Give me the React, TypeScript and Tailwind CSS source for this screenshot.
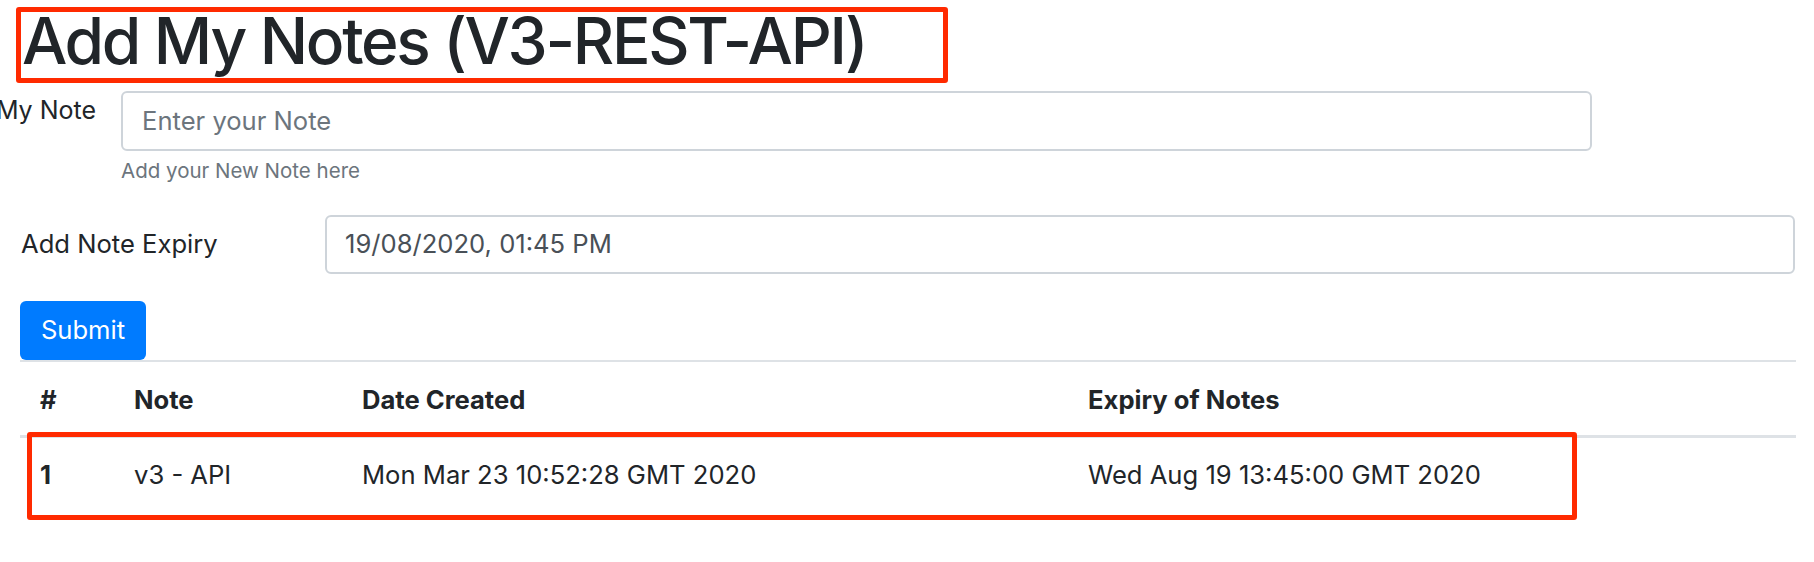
import React from "react";

export default function App() {
  return (
    <div className="relative w-[1814px] h-[562px] overflow-hidden bg-white text-[#212529] font-['Inter','Noto_Sans',sans-serif]">
      {/* Title */}
      <div className="relative h-[86px]">
        <h1 className="pl-[22px] pt-[3px] text-[64px] leading-[76px] font-medium tracking-[-2.3px] whitespace-nowrap">
          Add My Notes (V3-REST-API)
        </h1>
        <div className="absolute left-[16px] top-[7px] w-[932px] h-[76px] border-[5px] border-[#ff2a00] rounded-[3px]" />
      </div>

      {/* My Note row */}
      <div className="flex mt-[5px]">
        <div className="w-[121px] shrink-0 flex justify-end pr-[25px] pt-[4px]">
          <span className="whitespace-nowrap text-[25px] leading-[30px]">My Note</span>
        </div>
        <div className="w-[1471px] shrink-0">
          <div className="h-[60px] border-2 border-[#ced4da] rounded-[6px] flex items-center px-[19px]">
            <span className="text-[25.6px] text-[#6c757d]">Enter your Note</span>
          </div>
          <div className="mt-[5px] text-[20.5px] leading-[30px] text-[#6c757d]">Add your New Note here</div>
        </div>
      </div>

      {/* Expiry row */}
      <div className="flex items-center mt-[29px]">
        <div className="w-[325px] shrink-0 pl-[21px] text-[25.6px]">Add Note Expiry</div>
        <div className="w-[1470px] shrink-0 h-[59px] border-2 border-[#ced4da] rounded-[6px] flex items-center px-[18px]">
          <span className="text-[25.6px] text-[#495057]">19/08/2020, 01:45 PM</span>
        </div>
      </div>

      {/* Submit */}
      <div className="pl-[20px] mt-[27px]">
        <button className="w-[126px] h-[59px] bg-[#007bff] text-white rounded-[6px] text-[25.6px]">Submit</button>
      </div>

      {/* Table */}
      <div className="relative ml-[20px] w-[1776px]">
        <table className="w-full border-collapse text-[25.6px]">
          <thead>
            <tr className="border-t-2 border-[#dee2e6] border-b-[3px]">
              <th className="w-[94px] text-left font-bold pl-[20px] h-[75px] pt-[3px]">#</th>
              <th className="w-[229px] text-left font-bold pl-[20px] pt-[3px]">Note</th>
              <th className="w-[726px] text-left font-bold pl-[19px] pt-[3px]">Date Created</th>
              <th className="text-left font-bold pl-[19px] pt-[3px]">Expiry of Notes</th>
            </tr>
          </thead>
          <tbody>
            <tr>
              <td className="pl-[20px] h-[76px] font-bold">1</td>
              <td className="pl-[20px]">v3 - API</td>
              <td className="pl-[19px]">Mon Mar 23 10:52:28 GMT 2020</td>
              <td className="pl-[19px]">Wed Aug 19 13:45:00 GMT 2020</td>
            </tr>
          </tbody>
        </table>
        <div className="absolute left-[7px] top-[72px] w-[1550px] h-[88px] border-[5px] border-[#ff2a00] rounded-[3px]" />
      </div>
    </div>
  );
}
